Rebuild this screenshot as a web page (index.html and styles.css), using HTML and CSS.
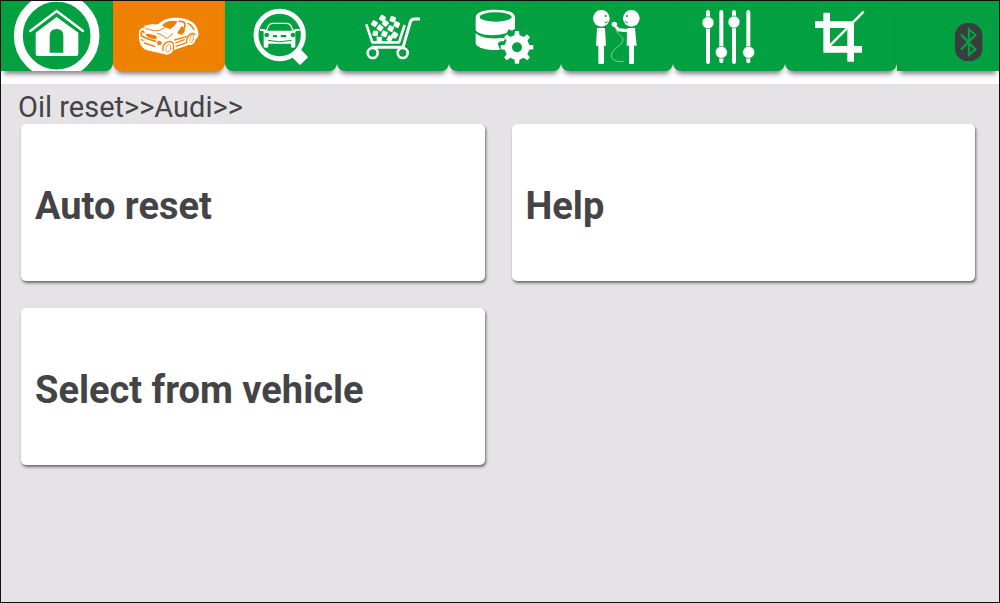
FILE: index.html
```html
<!DOCTYPE html>
<html lang="en">
<head>
    <meta charset="UTF-8">
    <meta name="viewport" content="width=device-width, initial-scale=1.0">
    <title>Oil reset</title>
    <link rel="stylesheet" href="styles.css">
</head>
<body>

    <nav class="toolbar">
        <button class="tab" type="button" aria-label="Home">
            <svg class="icon" viewBox="3 3 336 210">
                <circle cx="170" cy="107" r="115" fill="none" stroke="#fff" stroke-width="27"/>
                <path d="M91 93L170 33L249 93" fill="none" stroke="#fff" stroke-width="7" stroke-linecap="round"/>
                <path fill="#fff" fill-rule="evenodd" d="M170 51L235 98V162Q235 168 229 168H113Q107 168 107 162V98ZM149 158H190V108Q190 87 170 87Q149 87 149 108Z"/>
            </svg>
        </button>
        <button class="tab active" type="button" aria-label="Diagnosis">
            <svg class="icon" viewBox="9 3 336 210">
                <path fill="#fff" d="M88 91C92 86 99 83 106 82L146 72C156 61 168 56 186 54C206 52 232 56 248 67C258 75 264 86 265 98C267 106 263 114 257 118C255 130 247 137 237 134L190 151C185 162 172 167 161 162L108 150C98 145 91 137 89 126C86 116 86 101 88 91Z"/>
                <path fill="#fff" d="M102 77L128 72L153 78L138 84L105 81Z"/>
                <g fill="none" stroke="#ee8200" stroke-linecap="round" stroke-linejoin="round">
                    <path stroke-width="6" fill="#ee8200" d="M160 76C169 67 184 64 198 66C194 73 188 80 180 84Z"/>
                    <path stroke-width="5" d="M207 64C219 63 227 68 225 76L219 95"/>
                    <path stroke-width="6" fill="#ee8200" d="M205 99L216 82L222 91L216 101Z"/>
                    <path stroke-width="4" d="M234 70C243 74 248 81 252 89"/>
                    <path stroke-width="3" d="M107 86C124 90 137 94 146 92L164 83"/>
                    <path stroke-width="3" d="M142 100C156 103 164 110 170 116L188 101"/>
                    <path stroke-width="5" d="M94 98C96 93 99 91 102 97M94 100V108C105 113 116 119 137 124"/>
                    <path stroke-width="6" fill="#ee8200" d="M110 104C120 103 127 108 137 110V114C124 115 116 111 110 104Z"/>
                    <path stroke-width="4" d="M103 129L134 139M94 119L99 121"/>
                    <circle cx="148" cy="129" r="6" stroke-width="2" fill="#ee8200"/>
                    <path stroke-width="4" d="M159 151C156 132 174 118 188 128C192 132 191 140 190 148"/>
                    <ellipse cx="175" cy="145" rx="7" ry="12" stroke-width="2" transform="rotate(15 175 145)"/>
                    <path stroke-width="4" d="M230 128C229 108 243 94 255 104"/>
                    <ellipse cx="245" cy="116" rx="5" ry="12" stroke-width="2" transform="rotate(10 245 116)"/>
                    <path stroke-width="4" d="M194 120L229 110M197 129L223 119M198 139L230 128"/>
                </g>
            </svg>
        </button>
        <button class="tab" type="button" aria-label="Vehicle search">
            <svg class="icon" viewBox="9 3 336 210">
                <circle cx="173" cy="105" r="71" fill="none" stroke="#fff" stroke-width="15"/>
                <path fill="#fff" stroke="#fff" stroke-width="8" stroke-linejoin="round" d="M235 153L253 171L234 190L216 172Z"/>
                <path fill="none" stroke="#fff" stroke-width="4" d="M132 96L139 78Q143 70 153 70H193Q203 70 207 78L215 96"/>
                <path fill="#fff" d="M114 87H126Q131 88 132 92H215Q216 88 221 87H233V93H223L220 96V139Q220 143 215 143H211Q207 143 207 139V131H139V139Q139 143 134 143H130Q125 143 125 139V96L123 93H114Z"/>
                <g fill="#02a040">
                    <circle cx="134" cy="105" r="7"/>
                    <circle cx="213" cy="105" r="7"/>
                    <rect x="153" y="105" width="12" height="7" rx="2"/>
                    <rect x="176" y="105" width="17" height="7" rx="2"/>
                </g>
                <path fill="none" stroke="#02a040" stroke-width="3" d="M138 121Q173 130 209 121"/>
            </svg>
        </button>
        <button class="tab" type="button" aria-label="Shop">
            <svg class="icon" viewBox="9 3 336 210">
                <g fill="none" stroke="#fff" stroke-width="8" stroke-linejoin="round">
                    <path d="M97 73L115 127H195L212 75"/>
                    <path stroke-width="9" d="M112 142H207L229 66Q232 57 241 57H258"/>
                    <circle cx="116" cy="159" r="15"/>
                    <circle cx="206" cy="159" r="15"/>
                </g>
                <g fill="#fff">
                    <rect x="137" y="46" width="17" height="17" rx="3" transform="rotate(32 145 54)"/>
                    <rect x="168" y="49" width="17" height="17" rx="3" transform="rotate(20 176 57)"/>
                    <rect x="113" y="62" width="17" height="17" rx="3" transform="rotate(30 121 70)"/>
                    <rect x="146" y="61" width="17" height="17" rx="3" transform="rotate(40 154 69)"/>
                    <rect x="180" y="65" width="17" height="17" rx="3" transform="rotate(25 188 73)"/>
                    <rect x="130" y="75" width="17" height="17" rx="3" transform="rotate(35 138 83)"/>
                    <rect x="162" y="77" width="17" height="17" rx="3" transform="rotate(25 170 85)"/>
                    <rect x="116" y="92" width="16" height="16" rx="3" transform="rotate(10 124 100)"/>
                    <rect x="143" y="93" width="17" height="17" rx="3" transform="rotate(20 151 101)"/>
                    <rect x="173" y="96" width="18" height="18" rx="3" transform="rotate(35 182 105)"/>
                    <rect x="128" y="110" width="16" height="17" rx="2"/>
                    <rect x="160" y="107" width="15" height="17" rx="2" transform="rotate(30 167 115)"/>
                </g>
            </svg>
        </button>
        <button class="tab" type="button" aria-label="Data management">
            <svg class="icon" viewBox="9 3 336 210">
                <path fill="#fff" d="M89 52C89 36 115 29 148 29C181 29 207 36 207 52V86L198 92L188 88L182 99C142 111 98 106 89 91Z"/>
                <ellipse cx="149" cy="51" rx="48" ry="14" fill="#02a040"/>
                <path fill="#fff" d="M89 99C101 113 138 119 168 113L178 116L173 124H164L155 130L162 150C130 152 95 146 89 131Z"/>
                <circle cx="213" cy="142" r="26" fill="none" stroke="#fff" stroke-width="22"/>
                <g fill="#fff">
                    <path id="tooth" d="M205 108L207 93H219L221 108Z"/>
                    <use href="#tooth" transform="rotate(45 213 142)"/>
                    <use href="#tooth" transform="rotate(90 213 142)"/>
                    <use href="#tooth" transform="rotate(135 213 142)"/>
                    <use href="#tooth" transform="rotate(180 213 142)"/>
                    <use href="#tooth" transform="rotate(225 213 142)"/>
                    <use href="#tooth" transform="rotate(270 213 142)"/>
                    <use href="#tooth" transform="rotate(315 213 142)"/>
                </g>
            </svg>
        </button>
        <button class="tab" type="button" aria-label="Remote help">
            <svg class="icon" viewBox="9 3 336 210">
                <g fill="#fff">
                    <circle cx="130" cy="55" r="25"/>
                    <circle cx="220" cy="55" r="25"/>
                    <path d="M117 84H141L144 137H138V188Q138 192 134 192H125Q121 192 121 188V137H114Z"/>
                    <path d="M208 84H231L236 137H228V188Q228 192 224 192H217Q213 192 213 188V137H206L207 97L178 94L169 81L177 78L184 85L208 87Z"/>
                    <circle cx="169" cy="73" r="8"/>
                </g>
                <path fill="none" stroke="#b5efc7" stroke-width="2" d="M174 92C183 108 200 110 193 127C185 140 160 149 160 168C160 181 179 187 197 184"/>
                <g fill="#02a040">
                    <circle cx="143" cy="48" r="3"/>
                    <circle cx="207" cy="48" r="3"/>
                </g>
                <path fill="none" stroke="#02a040" stroke-width="3" d="M140 68Q146 69 149 64M201 63Q204 69 210 68"/>
            </svg>
        </button>
        <button class="tab" type="button" aria-label="Settings">
            <svg class="icon" viewBox="9 3 336 210">
                <path fill="none" stroke="#fff" stroke-width="12" stroke-linecap="round" d="M114 36V186M154 36V184M192 36V186M235 36V184"/>
                <g fill="#fff" stroke="#02a040" stroke-width="2">
                    <circle cx="114" cy="68" r="18"/>
                    <circle cx="154" cy="157" r="18"/>
                    <circle cx="192" cy="66" r="18"/>
                    <circle cx="236" cy="157" r="18"/>
                </g>
            </svg>
        </button>
        <button class="tab" type="button" aria-label="Screenshot">
            <svg class="icon" viewBox="15 3 336 210">
                <path fill="none" stroke="#fff" stroke-width="20" d="M140 38V148H246M105 74H212V185"/>
                <path fill="none" stroke="#fff" stroke-width="7" d="M147 139L251 35"/>
            </svg>
        </button>
        <button class="tab status" type="button" aria-label="Bluetooth">
            <svg class="icon-status" viewBox="522 66 87 120">
                <rect x="525" y="69" width="82" height="115" rx="38" fill="#3a3d3e"/>
                <path fill="none" stroke="#02a040" stroke-width="7" d="M543 103L586 148L567 165V88L586 105L543 149"/>
            </svg>
        </button>
    </nav>

    <main class="content">
        <h1 class="path">Oil reset&gt;&gt;Audi&gt;&gt;</h1>
        <div class="menu">
            <button class="card" type="button">Auto reset</button>
            <button class="card" type="button">Help</button>
            <button class="card" type="button">Select from vehicle</button>
        </div>
    </main>

</body>
</html>
```
FILE: styles.css
```css
* {
    box-sizing: border-box;
}
body {
    font-family: Roboto, Arial, sans-serif;
    min-height: 100vh;
    margin: 0;
    border: 1px solid #111;
    background-color: #e5e3e6;
    color: #444346;
}
.toolbar {
    display: grid;
    grid-template-columns: repeat(8, 112fr) 102fr;
    padding-bottom: 13px;
    background-color: #fff;
    overflow: hidden;
}
.tab {
    display: flex;
    justify-content: center;
    height: 70px;
    padding: 0;
    border: 0;
    border-radius: 0 0 8px 8px;
    background-color: #02a040;
    box-shadow: 0 6px 5px -3px rgba(60, 40, 60, 0.6);
    overflow: hidden;
    cursor: pointer;
}
.tab:first-child {
    border-bottom-left-radius: 0;
}
.tab.active {
    background-color: #ee8200;
}
.tab.status {
    justify-content: flex-end;
    align-items: center;
    padding: 12px 16px 0 0;
    border-radius: 0;
}
.icon {
    flex: none;
    width: 112px;
    height: 70px;
}
.icon-status {
    width: 29px;
    height: 40px;
}
.content {
    padding: 6px 24px 24px 20px;
}
.path {
    margin: 0 0 0 -3px;
    font-size: 29px;
    font-weight: 400;
    line-height: 34px;
}
.menu {
    display: grid;
    grid-template-columns: 1fr 1fr;
    gap: 27px;
}
.card {
    min-height: 157px;
    padding: 6px 14px 0;
    border: 0;
    border-radius: 5px;
    background-color: #fff;
    box-shadow: 1px 2px 3px rgba(0, 0, 0, 0.55);
    color: inherit;
    font-family: inherit;
    font-size: 38px;
    font-weight: 700;
    line-height: 48px;
    text-align: left;
    cursor: pointer;
}
```
